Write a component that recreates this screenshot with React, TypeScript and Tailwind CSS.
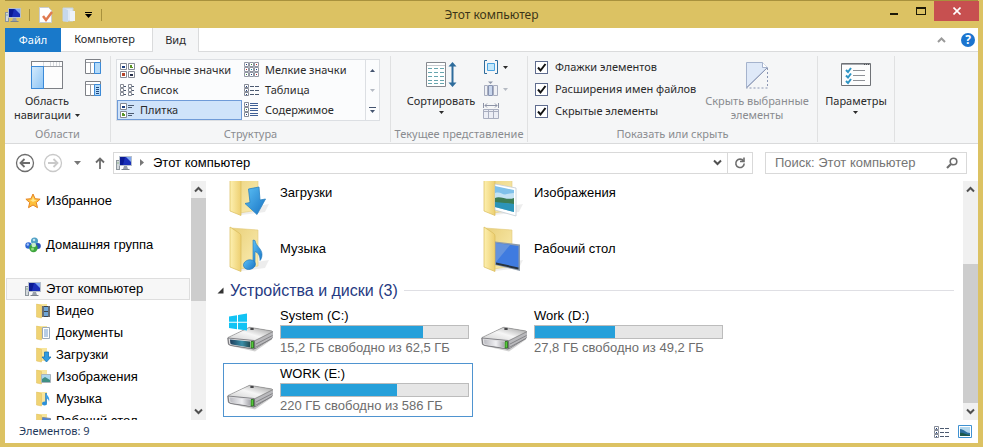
import { useState } from "react";
import type { ReactNode } from "react";
import clsx from "clsx";

const DownArrow = ({ className = "" }: { className?: string }) => (
    <svg width="5" height="3" viewBox="0 0 5 3" className={clsx("shrink-0", className)} fill="currentColor">
        <path d="M0 0h5L2.5 3z" />
    </svg>
);

const Chevron = ({ up = false }: { up?: boolean }) => (
    <svg width="9" height="7" viewBox="0 0 9 7" fill="none" stroke="#505050" strokeWidth="2">
        <path d={up ? "M1 5.5 4.5 2 8 5.5" : "M1 1.5 4.5 5 8 1.5"} />
    </svg>
);

const PcIcon = () => (
    <svg width="16" height="16" viewBox="0 0 16 16" className="shrink-0">
        <rect x="0.5" y="5.5" width="3" height="9" fill="#d3d8dc" stroke="#8c959c" />
        <path d="M1.5 8h1" stroke="#4e9a3c" />
        <rect x="3.5" y="1.5" width="12" height="9" fill="#1a2fb8" stroke="#b6bfcc" />
        <path d="M10 2h5v5z" fill="#7ea6f2" />
        <path d="M4 2h5L7 10H4z" fill="#0a1a94" />
        <path d="M8 11h3l1 3H7z" fill="#9aa1ab" />
        <path d="M5.5 14.5h8" stroke="#7b828c" />
    </svg>
);

const StarIcon = () => (
    <svg width="16" height="16" viewBox="0 0 16 16" className="shrink-0">
        <path d="M8 1l2.1 4.7 5 .5-3.8 3.4 1.2 5.1L8 12l-4.5 2.7 1.2-5.1L.9 6.2l5-.5z" fill="#fdbf3b" stroke="#e58523" strokeLinejoin="round" />
        <path d="M8 3.5l1.2 3.2 2.8.3L8 9 5 7l2-.3z" fill="#ffe68a" />
    </svg>
);

const HomegroupIcon = () => (
    <svg width="16" height="16" viewBox="0 0 16 16" className="shrink-0">
        <circle cx="9.5" cy="4" r="3.5" fill="#4f9fc4" />
        <circle cx="3.5" cy="8.5" r="3.2" fill="#2c66d4" />
        <circle cx="12.8" cy="9" r="3" fill="#2950b8" />
        <circle cx="8.5" cy="11" r="4.2" fill="#3da53d" />
        <circle cx="8.8" cy="8" r="2.3" fill="#c9eccb" />
        <circle cx="9" cy="3" r="1.3" fill="#bfe4f0" />
        <circle cx="2.8" cy="7.5" r="1.2" fill="#a6c6fa" />
        <circle cx="7.5" cy="12" r="1.5" fill="#8fdc7c" />
    </svg>
);

const SmallFolder = ({ kind }: { kind: string }) => (
    <svg width="16" height="16" viewBox="0 0 16 16" className="shrink-0">
        <path d="M1 1h10v13H1z" fill="#f7e59c" />
        <path d="M0.5 1l5 1.5V15L0.5 14z" fill="#f0d373" stroke="#dfbf5c" strokeWidth="0.5" />
        {kind === "video" && (
            <>
                <path d="M6 3h8v11H6z" fill="#3c444c" />
                <path d="M8 4h4v4H8zM8 9h4v4H8z" fill="#6fa6d6" />
                <path d="M7 3.5V14M13 3.5V14" stroke="#e8e8e8" strokeDasharray="1 1" />
            </>
        )}
        {kind === "docs" && (
            <>
                <path d="M6.5 2.5h7v11h-7z" fill="#fff" stroke="#9aa9b8" />
                <path d="M8 5h4M8 7h4M8 9h4M8 11h4" stroke="#6f9acb" />
            </>
        )}
        {kind === "downloads" && <path d="M8.5 5h4v5H15l-4.500 5L6 10h2.500z" fill="#2f9be0" stroke="#1a74b5" strokeWidth="0.8" />}
        {kind === "pictures" && (
            <>
                <path d="M5.5 5.5h9v8h-9z" fill="#a9d6ee" stroke="#a8b3bb" />
                <path d="M6 10l3-2 5 3v2H6z" fill="#3f8f84" />
            </>
        )}
        {kind === "music" && (
            <>
                <path d="M10 2v10" stroke="#1d78c4" strokeWidth="1.5" />
                <path d="M10 2c1 3 4.500 4 3 9 0-2-1-3-3-4z" fill="#3ba1e8" />
                <ellipse cx="8.5" cy="12.5" rx="2.5" ry="2" fill="#2b8fdb" />
            </>
        )}
        {kind === "desktop" && <path d="M6.5 4.5l8 1v7l-8-1z" fill="#4f86dd" stroke="#7c8ba0" />}
    </svg>
);

const BigFolder = ({ kind }: { kind: string }) => (
    <svg width="48" height="48" viewBox="0 0 48 48" className="shrink-0">
        <defs>
            <linearGradient id={`back-${kind}`} x1="0" y1="0" x2="1" y2="1">
                <stop offset="0" stopColor="#e9cf78" />
                <stop offset="1" stopColor="#fbeeb4" />
            </linearGradient>
            <linearGradient id={`flap-${kind}`} x1="0" y1="0" x2="1" y2="0">
                <stop offset="0" stopColor="#fdf0b0" />
                <stop offset="1" stopColor="#edcf70" />
            </linearGradient>
            <linearGradient id={`blue-${kind}`} x1="0" y1="0" x2="1" y2="1">
                <stop offset="0" stopColor="#5cc0f5" />
                <stop offset="1" stopColor="#1873c4" />
            </linearGradient>
        </defs>
        <path d="M14 46l24-3 4-8-28 4z" fill="#000" opacity="0.07" />
        <path d="M4 3l27 2v36l-18 3z" fill={`url(#back-${kind})`} stroke="#e3cb80" strokeWidth="0.6" />
        <path d="M3 2l9 6q2 1 2 3v35.500L3 42z" fill={`url(#flap-${kind})`} stroke="#dabb5a" strokeWidth="0.7" />
        {kind === "downloads" && (
            <path d="M21.5 20l10.500-2 1 13 5.500-1-8.500 15.500-12-11 5-1z" fill="url(#blue-downloads)" stroke="#2a82c0" strokeWidth="0.8" />
        )}
        {kind === "music" && (
            <>
                <path d="M28 15.500c1 6 7 8 7 14 0 3-1 5-2 6 0-5-2-8-5-9v14h-2V15z" fill="url(#blue-music)" stroke="#1f75b8" strokeWidth="0.6" />
                <ellipse cx="22.5" cy="39.5" rx="6" ry="4.8" transform="rotate(-14 23 40)" fill="url(#blue-music)" stroke="#1f75b8" strokeWidth="0.6" />
            </>
        )}
        {kind === "pictures" && (
            <>
                <path d="M14 15l21 4v28l-21-6z" fill="#fff" stroke="#c3ccd3" strokeWidth="0.8" />
                <path d="M14 17l19 4v22l-19-5z" fill="#7fc0ea" />
                <path d="M14 24c6-2 8 3 12 1l7-1v6l-19 1z" fill="#c3e2f4" />
                <path d="M14 29c5-3 12 3 19 0v6l-19-1z" fill="#3d7c54" />
                <path d="M14 33l19 2v8l-19-5z" fill="#2c94b8" />
            </>
        )}
        {kind === "desktop" && (
            <>
                <path d="M14 16.500l25 3v26.500l-25-6z" fill="#8d9bab" />
                <path d="M15 18l22.500 3v22L15 38z" fill="#3f7be0" />
                <path d="M15 18l14 2-14 17z" fill="#6593dd" />
                <path d="M15 37.500l22.500 5v2L15 39.500z" fill="#26323f" />
            </>
        )}
    </svg>
);

const DriveIcon = ({ system = false }: { system?: boolean }) => (
    <svg width="48" height="48" viewBox="0 0 48 48" className="shrink-0">
        <defs>
            <linearGradient id={system ? "topSys" : "topDrive"} x1="0" y1="1" x2="1" y2="0">
                <stop offset="0" stopColor="#cfcfcf" />
                <stop offset="0.5" stopColor="#f6f6f6" />
                <stop offset="1" stopColor="#9a9a9a" />
            </linearGradient>
            <linearGradient id={system ? "frontSys" : "frontDrive"} x1="0" y1="0" x2="1" y2="0">
                <stop offset="0" stopColor={system ? "#1e3d5c" : "#bcbcc2"} />
                <stop offset="0.6" stopColor={system ? "#3a8fa8" : "#f0f0f3"} />
                <stop offset="1" stopColor={system ? "#244a52" : "#a8a8ae"} />
            </linearGradient>
        </defs>
        <path d="M4 38l24 5.500 17-12v-4z" fill="#000" opacity="0.18" />
        <path d="M0.5 30L22 19.500q1-.5 2 0L45 23q1 .3 1 1.500V29q0 1-1 1.600L28.500 41q-1 .5-2 .3L3 37.500q-2-.5-2.200-2z" fill="#77777a" />
        <path d="M1 29.500L22 19.500q1-.5 2 0L45 23q1 .5 0 1L28 32.500q-1 .5-2 .3L2 31q-1.500-.5-1-1.500z" fill={system ? "url(#topSys)" : "url(#topDrive)"} stroke="#858585" strokeWidth="0.6" />
        <path d="M28 33l18-9v4.500q0 1-1 1.600L28.500 40.500z" fill="#b9b9bc" />
        <path d="M29 36l16.500-8.500M29 39l16-8.500" stroke="#77777b" strokeWidth="0.8" />
        <path d="M1 30l26 2.500V41L4 37.500q-2-.5-2.300-2z" fill="#dedee0" stroke="#707075" strokeWidth="0.8" />
        <path d="M3 31.400l20 2v6L5 36.600q-1.500-.3-1.700-1.500z" fill={system ? "url(#frontSys)" : "url(#frontDrive)"} />
        <path d="M24 33.500h2.500v6.500H24z" fill="#55c93a" stroke="#24691a" strokeWidth="0.8" />
        <ellipse cx="25" cy="21" rx="2" ry="0.9" fill="#3c3c3e" />
        {system && (
            <path d="M2 8.500l8-1.300v6.600H2zM11 7l9-1.500v8.300h-9zM2 14.800h8v6.400l-8-1.100zM11 14.800h9V22.600l-9-1.300z" fill="#12c3f4" />
        )}
    </svg>
);

/* ---------- ribbon drawings ---------- */

const NavPaneIcon = () => (
    <svg width="32" height="30" viewBox="0 0 32 30">
        <defs>
            <linearGradient id="pane" x1="0" y1="0" x2="1" y2="1">
                <stop offset="0" stopColor="#d5ebfc" />
                <stop offset="1" stopColor="#8cc4f5" />
            </linearGradient>
        </defs>
        <rect x="0.5" y="1.5" width="31" height="27" fill="#fdfdfd" stroke="#7d8086" />
        <path d="M1 6.500h30" stroke="#9a9da3" />
        <path d="M12.500 2v4M19.500 2v4M22.500 2v4M25.500 2v4M28.500 2v4" stroke="#d6d9dd" />
        <rect x="0.5" y="6.5" width="12" height="22" fill="url(#pane)" stroke="#3b8ad8" />
    </svg>
);

const PreviewPaneIcon = ({ details = false }: { details?: boolean }) => (
    <svg width="16" height="16" viewBox="0 0 16 16">
        <path d="M0.500 0.500h15v14H0.500z" fill="#fff" stroke="#7d8086" />
        <path d="M1 3.500h14M5.500 4v11" stroke="#9a9da3" />
        <path d="M9.500 3.500h6v11h-6z" fill="#b3daf9" stroke="#3b8ad8" />
        {details && <path d="M11 6.500h3M11 8.500h3M11 10.500h3M11 12.500h3" stroke="#234a80" />}
    </svg>
);

const ViewIcon = ({ kind }: { kind: string }) => (
    <svg width="16" height="16" viewBox="0 0 16 16" className="shrink-0">
        {kind === "normal" && (
            <>
                <path d="M1.500 1.500h6v6h-6zM9.500 1.500h6v6h-6zM1.500 9.500h6v6h-6zM9.500 9.500h6v6h-6z" fill="#fff" stroke="#868b96" />
                <path d="M3 4h3v2H3z" fill="#1d3f80" />
                <path d="M11 3h2v3h-2zM13 5h1v1h-1z" fill="#5a9427" />
                <path d="M3 11h3v3H3z" fill="#b5452a" />
                <path d="M11 12h3v2h-3z" fill="#26304c" />
            </>
        )}
        {kind === "small" && (
            <>
                <path d="M0.500 0.500h4v4h-4zM5.500 0.500h4v4h-4zM10.500 0.500h4v4h-4zM0.500 5.500h4v4h-4zM5.500 5.500h4v4h-4zM10.500 5.500h4v4h-4zM0.500 10.500h4v4h-4zM5.500 10.500h4v4h-4zM10.500 10.500h4v4h-4z" fill="#fff" stroke="#9297a3" />
                <path d="M2 2h1v1H2zM12 7h1v1h-1zM7 12h1v1H7z" fill="#1d3f80" />
                <path d="M7 2h1v1H7zM2 12h1v1H2z" fill="#3c8a3c" />
                <path d="M12 2h1v1h-1zM2 7h1v1H2zM12 12h1v1h-1z" fill="#b03030" />
                <path d="M7 7h1v1H7z" fill="#1b8a9a" />
            </>
        )}
        {kind === "list" && (
            <>
                <path d="M1.500 2.500h3v3h-3zM1.500 6.500h3v3h-3zM1.500 10.500h3v3h-3zM9.500 2.500h3v3h-3zM9.500 6.500h3v3h-3zM9.500 10.500h3v3h-3z" fill="#fff" stroke="#868b96" />
                <path d="M5 4.500h2M5 8.500h2M5 12.500h2M13 4.500h2M13 8.500h2M13 12.500h2" stroke="#4c5a70" />
            </>
        )}
        {(kind === "table" || kind === "details") && (
            <>
                <path d="M0.500 2.500h4v3h-4zM0.500 6.500h4v3h-4zM0.500 10.500h4v3h-4z" fill="#fff" stroke="#868b96" />
                <path d="M2 4h1v1H2zM2 8h1v1H2zM2 12h1v1H2z" fill="#1d3f80" />
                <path d="M6 4.500h4M11 4.500h4M6 8.500h4M11 8.500h4M6 12.500h4M11 12.500h4" stroke="#4c5a70" />
            </>
        )}
        {kind === "tiles" && (
            <>
                <path d="M1.500 1.500h6v6h-6zM1.500 9.500h6v6h-6z" fill="#fff" stroke="#868b96" />
                <path d="M3 4h3v2H3z" fill="#1d3f80" />
                <path d="M3 11h2v3H3zM5 12h1v2H5z" fill="#5a9427" />
                <path d="M9 3.500h6M9 5.500h4M9 11.500h6M9 13.500h4" stroke="#4c5a70" />
            </>
        )}
        {kind === "content" && (
            <>
                <path d="M0.500 0.500h4v4h-4zM0.500 5.500h4v4h-4zM0.500 10.500h4v4h-4z" fill="#fff" stroke="#868b96" />
                <path d="M2 2h1v1H2zM2 12h1v1H2z" fill="#1d3f80" />
                <path d="M2 7h1v1H2z" fill="#3c8a3c" />
                <path d="M6 1.500h8M6 3.500h8M6 6.500h8M6 8.500h8M6 11.500h8M6 13.500h8" stroke="#3f5f96" />
            </>
        )}
    </svg>
);

const SortIcon = () => (
    <svg width="32" height="30" viewBox="0 0 32 30">
        <path d="M1.500 2.500h19v24h-19z" fill="#fff" stroke="#85898f" />
        <path d="M2 5.500h18" stroke="#c5c9ce" />
        <path d="M3 8.500h16M3 12.500h16M3 16.500h16M3 20.500h16M3 23.500h16" stroke="#67a5ae" strokeDasharray="4 2" />
        <path d="M27.500 5v20" stroke="#2e6c9c" strokeWidth="2" />
        <path d="M23.500 6.500L27.500 2l4 4.500zM23.500 22.500h8l-4 4.500z" fill="#2e6c9c" />
    </svg>
);

const GroupByIcon = () => (
    <svg width="16" height="16" viewBox="0 0 16 16">
        <path d="M4 1.500H1.500v13H4M12 1.500h2.500v13H12" fill="none" stroke="#2e6c9c" />
        <path d="M4.500 4.500h7v7h-7z" fill="#c3e8fc" stroke="#4aa3e0" />
    </svg>
);

const AddColumnIcon = () => (
    <svg width="16" height="16" viewBox="0 0 16 16">
        <path d="M1.500 4.500h3v10h-3zM10.500 4.500h4v10h-4z" fill="#eef0f5" stroke="#a9aebf" />
        <path d="M5.500 4.500h4v10h-4z" fill="#c9d6ec" stroke="#8792b0" />
        <path d="M5 0.500h5L7.500 3z" fill="#8f97a8" />
    </svg>
);

const FitColumnsIcon = () => (
    <svg width="16" height="16" viewBox="0 0 16 16">
        <path d="M0.500 0v5M15.500 0v5M2 2.500h12M4 0.500l-2 2 2 2M12 0.500l2 2-2 2" fill="none" stroke="#8d93a6" />
        <path d="M0.500 6.500h15v9H0.500zM5.500 7v8M10.500 7v8M1 8.500h14" fill="#eceef5" stroke="#a9aebf" />
    </svg>
);

const HideIcon = () => (
    <svg width="24" height="30" viewBox="0 0 24 30">
        <path d="M1.500 27.500v-25h16l5 5z" fill="#dfe9f8" stroke="#a5b3cd" />
        <path d="M17.500 2.500v5h5" fill="#fff" stroke="#a5b3cd" />
        <path d="M22.500 8v20H1.500" fill="none" stroke="#8b96b3" strokeDasharray="2 2" />
        <path d="M1.500 28L22 8" stroke="#8b96b3" />
    </svg>
);

const OptionsIcon = () => (
    <svg width="32" height="30" viewBox="0 0 32 30">
        <path d="M1.500 3.500h29v22h-29z" fill="#fdfdfd" stroke="#6f7277" />
        <path d="M2 4.500h28" stroke="#a6a9ae" />
        <path d="M24 4.500h5" stroke="#4f5257" strokeDasharray="1 1" />
        <path d="M6 10l2 2 3-4M6 15.500l2 2 3-4M6 21l2 2 3-4" fill="none" stroke="#2e94c4" strokeWidth="2" />
        <path d="M13 10.500h12M13 15.500h12M13 20.500h12" stroke="#8e9197" />
    </svg>
);

/* ---------- ribbon parts ---------- */

const Group = ({ title, className = "", children }: { title?: string; className?: string; children: ReactNode }) => (
    <section className={clsx("flex shrink-0 flex-col border-r border-[#e0e1e2]", className)}>
        <div className="flex h-[70px] items-start">{children}</div>
        <h2 className="h-4 text-center leading-4 whitespace-nowrap text-[#8a8c90]">{title}</h2>
    </section>
);

const views = [
    { id: "normal", name: "Обычные значки" },
    { id: "small", name: "Мелкие значки" },
    { id: "list", name: "Список" },
    { id: "table", name: "Таблица" },
    { id: "tiles", name: "Плитка" },
    { id: "content", name: "Содержимое" },
];

const Check = ({ label }: { label: string }) => (
    <label className="flex h-[22px] items-center gap-[7px] whitespace-nowrap">
        <span className="grid">
            <input type="checkbox" defaultChecked className="peer size-[13px] appearance-none border border-[#5f6c8e] bg-white [grid-area:1/1]" />
            <svg width="13" height="13" viewBox="0 0 13 13" className="pointer-events-none invisible [grid-area:1/1] peer-checked:visible" fill="none" stroke="#111" strokeWidth="2">
                <path d="M3 6.500l2.500 3L10.500 3" />
            </svg>
        </span>
        {label}
    </label>
);

const Ribbon = () => {
    const [view, setView] = useState("tiles");
    return (
        <div className="flex shrink-0 overflow-hidden border-b border-[#d9dadb] bg-[#f5f6f7] pt-1 pb-px">
            <Group title="Области" className="w-[106px]">
                <button className="ml-2 flex w-[68px] flex-col items-center pt-1 leading-[14px]">
                    <NavPaneIcon />
                    <span className="pt-1">Область</span>
                    <span className="flex items-center gap-1">навигации<DownArrow /></span>
                </button>
                <div className="ml-1 flex flex-col gap-[6px] pt-[3px]">
                    <button aria-label="Область просмотра"><PreviewPaneIcon /></button>
                    <button aria-label="Область сведений"><PreviewPaneIcon details /></button>
                </div>
            </Group>
            <Group title="Структура" className="w-[280px]">
                <div className="mt-[3px] ml-[5px] flex border border-[#dcdfe3] bg-[#fbfcfd]">
                    <div className="grid grid-cols-[125px_123px]">
                        {views.map((v) => (
                            <button
                                key={v.id}
                                onClick={() => setView(v.id)}
                                className={clsx("flex h-5 items-center gap-[5px] border pl-px", view === v.id ? "border-[#6f9bd8] bg-[#cfe3fa]" : "border-transparent")}
                            >
                                <ViewIcon kind={v.id} />
                                {v.name}
                            </button>
                        ))}
                    </div>
                    <div className="flex w-[14px] flex-col border-l border-[#dcdfe3] text-[#44546f]">
                        <button aria-label="Вверх" className="grid h-5 place-items-center"><DownArrow className="rotate-180" /></button>
                        <button aria-label="Вниз" className="grid h-5 place-items-center text-[#b5bac3]"><DownArrow /></button>
                        <button aria-label="Дополнительно" className="flex h-5 flex-col items-center justify-center gap-[2px]">
                            <span className="h-px w-[7px] bg-current" />
                            <DownArrow />
                        </button>
                    </div>
                </div>
            </Group>
            <Group title="Текущее представление" className="w-[137px]">
                <button className="ml-3 flex w-[76px] flex-col items-center pt-1 leading-[14px]">
                    <SortIcon />
                    <span className="pt-1">Сортировать</span>
                    <span className="flex h-2 items-center"><DownArrow /></span>
                </button>
                <div className="ml-1 flex flex-col gap-[6px] pt-[3px]">
                    <button aria-label="Группировать" className="flex items-center gap-1"><GroupByIcon /><DownArrow /></button>
                    <button aria-label="Добавить столбцы" className="flex items-center gap-1 text-[#b5bac3]"><AddColumnIcon /><DownArrow /></button>
                    <button aria-label="Размер столбцов"><FitColumnsIcon /></button>
                </div>
            </Group>
            <Group title="Показать или скрыть" className="w-[290px]">
                <div className="ml-[7px] flex w-[165px] flex-col">
                    <Check label="Флажки элементов" />
                    <Check label="Расширения имен файлов" />
                    <Check label="Скрытые элементы" />
                </div>
                <button className="flex w-[114px] flex-col items-center pt-1 leading-[14px] text-[#8a8c90]">
                    <HideIcon />
                    <span className="pt-1">Скрыть выбранные</span>
                    <span>элементы</span>
                </button>
            </Group>
            <Group className="w-[77px] items-center">
                <button className="flex flex-col items-center pt-1 leading-[14px]">
                    <OptionsIcon />
                    <span className="pt-1">Параметры</span>
                    <span className="flex h-2 items-center"><DownArrow /></span>
                </button>
            </Group>
        </div>
    );
};

const TitleBar = () => (
    <header className="grid h-7 shrink-0 grid-cols-[1fr_auto_1fr] items-center border-t border-[#a8913d] text-[#3b3518]">
        <div className="flex items-center gap-2 text-[#a8913d]">
            <PcIcon />
            <span className="h-3 w-px bg-current" />
            <button aria-label="Свойства">
                <svg width="16" height="16" viewBox="0 0 16 16">
                    <path d="M1.500 0.500h9l3 3v12h-12z" fill="#fff" stroke="#c9ccd1" />
                    <path d="M5 9l3 4 6-8" fill="none" stroke="#e07a50" strokeWidth="2.5" />
                </svg>
            </button>
            <button aria-label="Новая папка">
                <svg width="14" height="16" viewBox="0 0 14 16">
                    <path d="M1 1h10v13H1z" fill="#dfe9f5" stroke="#c3d2e3" />
                    <path d="M1 1l5 2v12l-5-1z" fill="#c6d8ec" />
                    <path d="M8 4h5v10H8z" fill="#edf3fa" />
                </svg>
            </button>
            <button aria-label="Настройка панели" className="flex w-[9px] flex-col items-center gap-px text-black">
                <span className="h-px w-[7px] bg-current" />
                <svg width="7" height="4" viewBox="0 0 7 4"><path d="M0 0h7L3.500 4z" /></svg>
            </button>
            <span className="h-3 w-px bg-current" />
        </div>
        <h1 className="text-xs">Этот компьютер</h1>
        <div className="-mr-px flex items-start self-start justify-self-end text-[#1c1907]">
            <button aria-label="Свернуть" className="grid h-5 w-[26px] place-items-end justify-center pb-[6px]">
                <span className="h-[2px] w-2 bg-current" />
            </button>
            <button aria-label="Развернуть" className="grid h-5 w-[27px] place-items-center">
                <span className="h-2 w-[10px] border border-t-2 border-current" />
            </button>
            <button aria-label="Закрыть" className="grid h-5 w-[45px] place-items-center bg-[#c75050]">
                <svg width="8" height="8" viewBox="0 0 8 8" stroke="#fff" strokeWidth="1.6"><path d="M0.500 0.500l7 7M7.500 0.500l-7 7" /></svg>
            </button>
        </div>
    </header>
);

const Tabs = () => (
    <nav className="flex h-6 shrink-0 items-stretch bg-white">
        <button className="w-14 bg-[#1979ca] text-white">Файл</button>
        <button className="w-[91px] border-b border-[#dadbdc] pr-1">Компьютер</button>
        <button className="w-[47px] border-x border-[#dadbdc] bg-[#f5f6f7]">Вид</button>
        <div className="flex flex-1 items-center justify-end gap-[15px] border-b border-[#dadbdc] pr-[3px]">
            <button aria-label="Свернуть ленту">
                <svg width="9" height="6" viewBox="0 0 9 6" fill="none" stroke="#9a9a9a" strokeWidth="2"><path d="M1 5l3.500-3.500L8 5" /></svg>
            </button>
            <button aria-label="Справка" className="size-[14px] rounded-full bg-[#1b74cf] text-xs font-bold leading-[14px] text-white">?</button>
        </div>
    </nav>
);

const AddressBar = () => (
    <div className="flex h-[37px] shrink-0 items-center pr-[11px] pl-[10px] font-['Liberation_Sans',sans-serif] text-[13px]">
        <button aria-label="Назад">
            <svg width="20" height="20" viewBox="0 0 20 20" fill="none" stroke="#6d6d6d">
                <circle cx="10" cy="10" r="8.5" strokeWidth="1.3" />
                <path d="M15 10H6M9.500 6L5.500 10l4 4" strokeWidth="1.8" />
            </svg>
        </button>
        <button aria-label="Вперед" className="ml-2">
            <svg width="20" height="20" viewBox="0 0 20 20" fill="none" stroke="#c9c9c9">
                <circle cx="10" cy="10" r="8.5" strokeWidth="1.3" />
                <path d="M5 10h9M10.500 6l4 4-4 4" strokeWidth="1.8" />
            </svg>
        </button>
        <button aria-label="Последние места" className="ml-[11px]">
            <svg width="7" height="4" viewBox="0 0 7 4" fill="#777"><path d="M0 0h7L3.500 4z" /></svg>
        </button>
        <button aria-label="Вверх" className="ml-[14px]">
            <svg width="10" height="12" viewBox="0 0 10 12" fill="none" stroke="#6d6d6d" strokeWidth="1.8"><path d="M5 12V1.500M1 5.500l4-4 4 4" /></svg>
        </button>
        <div className="ml-2 flex h-[22px] flex-1 items-center border border-[#d9d9d9] pl-[2px] text-black">
            <PcIcon />
            <svg width="4" height="7" viewBox="0 0 4 7" fill="#777" className="ml-2"><path d="M0 0v7l4-3.500z" /></svg>
            <button className="ml-[9px]">Этот компьютер</button>
            <button aria-label="Предыдущие расположения" className="ml-auto px-[5px]"><Chevron /></button>
            <button aria-label="Обновить" className="grid h-full w-[25px] place-items-center border-l border-[#d9d9d9]">
                <svg width="12" height="12" viewBox="0 0 12 12" fill="none" stroke="#6d6d6d" strokeWidth="1.6">
                    <path d="M9.500 4A4.200 4.200 0 1 0 10.200 6.500" />
                    <path d="M10 0.500V4.500H6" />
                </svg>
            </button>
        </div>
        <label className="ml-3 flex h-[22px] w-[202px] items-center border border-[#d9d9d9] pr-2 pl-[9px]">
            <input type="search" aria-label="Поиск" placeholder="Поиск: Этот компьютер" className="min-w-0 flex-1 outline-none placeholder:text-[#757575]" />
            <svg width="12" height="12" viewBox="0 0 12 12" fill="none" stroke="#6d6d6d">
                <circle cx="7.5" cy="4.5" r="3.3" strokeWidth="1.6" />
                <path d="M5 7L1 11" strokeWidth="2.2" />
            </svg>
        </label>
    </div>
);

const libraries = [
    { id: "video", name: "Видео" },
    { id: "docs", name: "Документы" },
    { id: "downloads", name: "Загрузки" },
    { id: "pictures", name: "Изображения" },
    { id: "music", name: "Музыка" },
    { id: "desktop", name: "Рабочий стол" },
];

const Sidebar = () => (
    <aside className="flex w-[201px] shrink-0 overflow-hidden">
        <div className="flex-1 overflow-hidden px-px pt-[9px]">
            <a href="#favorites" className="flex h-[22px] items-center gap-[5px] pl-[19px]"><StarIcon />Избранное</a>
            <a href="#homegroup" className="mt-[22px] flex h-[22px] items-center gap-[5px] pl-[19px]"><HomegroupIcon />Домашняя группа</a>
            <a href="#computer" className="mt-[22px] flex h-[22px] items-center gap-[5px] border border-[#dedede] bg-[#f7f7f7] pl-[18px]"><PcIcon />Этот компьютер</a>
            {libraries.map((l) => (
                <a key={l.id} href={`#${l.id}`} className="flex h-[22px] items-center gap-[4px] pl-[30px]"><SmallFolder kind={l.id} />{l.name}</a>
            ))}
        </div>
        <ScrollBar before="flex-0" thumb="flex-1" after="flex-1" />
    </aside>
);

const ScrollBar = ({ before, thumb, after }: { before: string; thumb: string; after: string }) => (
    <div className="flex w-[15px] shrink-0 flex-col bg-[#f0f0f0]">
        <button aria-label="Прокрутить вверх" className="grid h-[17px] place-items-center"><Chevron up /></button>
        <div className={before} />
        <div className={clsx("bg-[#cdcdcd]", thumb)} />
        <div className={after} />
        <button aria-label="Прокрутить вниз" className="grid h-[17px] place-items-center"><Chevron /></button>
    </div>
);

const folders = [
    { id: "downloads", name: "Загрузки" },
    { id: "pictures", name: "Изображения" },
    { id: "music", name: "Музыка" },
    { id: "desktop", name: "Рабочий стол" },
];

const drives = [
    { name: "System (C:)", info: "15,2 ГБ свободно из 62,5 ГБ", used: 76, system: true },
    { name: "Work (D:)", info: "27,8 ГБ свободно из 49,2 ГБ", used: 43 },
    { name: "WORK (E:)", info: "220 ГБ свободно из 586 ГБ", used: 62, selected: true },
];

const Content = () => (
    <main className="flex flex-1 flex-col justify-end overflow-hidden pb-[3px] pr-[9px] pl-[11px]">
        <div className="grid shrink-0 grid-cols-[repeat(auto-fill,250px)] gap-x-1 gap-y-[2px] pl-[6px]">
            {folders.map((f) => (
                <button key={f.id} className="flex h-[54px] items-center gap-[5px] px-1 text-left"><BigFolder kind={f.id} />{f.name}</button>
            ))}
        </div>
        <h2 className="flex h-[29px] shrink-0 items-center gap-[6px] text-base text-[#263a82]">
            <svg width="7" height="7" viewBox="0 0 7 7" fill="#333"><path d="M6.500 0.500v6H0.500z" /></svg>
            Устройства и диски (3)
            <span className="h-px flex-1 bg-[#dfdfe4]" />
        </h2>
        <div className="grid shrink-0 grid-cols-[repeat(auto-fill,250px)] gap-1 pl-[6px]">
            {drives.map((d) => (
                <button key={d.name} className={clsx("flex h-[54px] items-center gap-[5px] border px-[3px] text-left leading-4", d.selected ? "border-[#4f94d0]" : "border-transparent")}>
                    <DriveIcon system={d.system} />
                    <span className="flex flex-1 flex-col gap-px">
                        <span>{d.name}</span>
                        <span className="h-[14px] border border-[#bcbcbc] bg-[#e6e6e6]">
                            <span className="block h-full bg-[#26a0da]" style={{ width: `${d.used}%` }} />
                        </span>
                        <span className="text-[#6d6d6d]">{d.info}</span>
                    </span>
                </button>
            ))}
        </div>
    </main>
);

const StatusBar = () => (
    <footer className="flex h-[23px] shrink-0 items-center justify-between pr-[6px] pl-[14px] text-[#1e395b]">
        <span>Элементов: 9</span>
        <div className="flex items-center gap-2">
            <button aria-label="Таблица"><ViewIcon kind="details" /></button>
            <button aria-label="Крупные значки">
                <svg width="14" height="13" viewBox="0 0 14 13">
                    <path d="M0.500 0.500h13v12H0.500z" fill="#fff" stroke="#3f92d2" />
                    <path d="M2 2h10v9H2z" fill="#2d6f9e" />
                    <path d="M2 4c4 0 6 4 10 4V2H2z" fill="#b4d8ee" />
                    <path d="M2 8c3-1 5 2 10 2v1H2z" fill="#1d5a4c" />
                </svg>
            </button>
        </div>
    </footer>
);

export default function App() {
    return (
        <div className="flex h-screen flex-col bg-[#dcc263] px-[5px] pb-1 font-['Noto_Sans',sans-serif] text-[11px] text-[#2b2b2b]">
            <TitleBar />
            <div className="flex min-h-0 flex-1 flex-col bg-white">
                <Tabs />
                <Ribbon />
                <AddressBar />
                <div className="flex min-h-0 flex-1 font-['Liberation_Sans',sans-serif] text-[13px] text-black">
                    <Sidebar />
                    <Content />
                    <ScrollBar before="flex-[66]" thumb="flex-[139]" after="flex-0" />
                </div>
                <StatusBar />
            </div>
        </div>
    );
}
